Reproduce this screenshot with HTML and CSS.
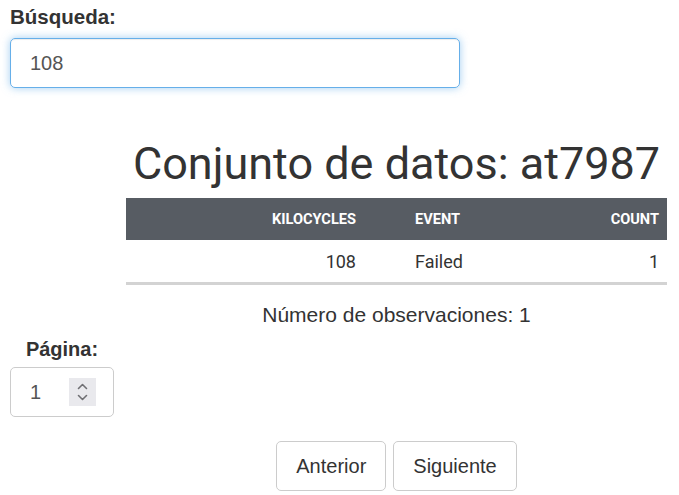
FILE: index.html
```html
<!DOCTYPE html>
<html lang="es">
<head>
<meta charset="utf-8">
<title>Conjunto de datos</title>
<link rel="stylesheet" href="styles.css">
</head>
<body>
<div class="page">
  <div class="search">
    <label class="lbl">Búsqueda:</label>
    <div class="text-input">108</div>
  </div>
  <div class="row">
    <aside class="side">
      <label class="lbl side-lbl">Página:</label>
      <div class="spin">
        <span class="spin-val">1</span>
        <span class="spin-arrows">
          <svg width="27" height="28" viewBox="0 0 27 28">
            <path d="M9.5 10.5 L13.5 6.5 L17.5 10.5" fill="none" stroke="#6f6f73" stroke-width="1.6" stroke-linecap="round" stroke-linejoin="round"/>
            <path d="M9.5 17.5 L13.5 21.5 L17.5 17.5" fill="none" stroke="#6f6f73" stroke-width="1.6" stroke-linecap="round" stroke-linejoin="round"/>
          </svg>
        </span>
      </div>
    </aside>
    <main class="main">
      <h1 class="title">Conjunto de datos: at7987</h1>
      <table class="data">
        <thead>
          <tr><th class="c1">KILOCYCLES</th><th class="c2">EVENT</th><th class="c3">COUNT</th></tr>
        </thead>
        <tbody>
          <tr><td class="c1">108</td><td class="c2">Failed</td><td class="c3">1</td></tr>
        </tbody>
      </table>
      <p class="count">Número de observaciones: 1</p>
      <div class="pager">
        <button class="btn btn-prev">Anterior</button>
        <button class="btn btn-next">Siguiente</button>
      </div>
    </main>
  </div>
</div>
</body>
</html>
```
FILE: styles.css
```css
html, body {
  margin: 0;
  padding: 0;
  background: #ffffff;
}
body {
  font-family: "Liberation Sans", Arial, sans-serif;
  color: #333333;
}
.page {
  padding: 5px 12px 0 10px;
}
.lbl {
  display: block;
  font-weight: bold;
  font-size: 20px;
  line-height: 24px;
  color: #333333;
}
.search .lbl {
  font-size: 20.5px;
  margin-bottom: 9px;
}
.text-input {
  box-sizing: border-box;
  width: 450px;
  height: 50px;
  border: 1px solid #66afe9;
  border-radius: 5px;
  box-shadow: inset 0 1px 1px rgba(0,0,0,.075), 0 0 8px rgba(102,175,233,.6);
  display: flex;
  align-items: center;
  padding-left: 19px;
  font-size: 20px;
  color: #555555;
}
.row {
  display: flex;
  gap: 12px;
  margin-top: 51px;
}
.side {
  width: 104px;
  flex: none;
  margin-top: 198px;
}
.side-lbl {
  text-align: center;
  margin-bottom: 6px;
}
.spin {
  box-sizing: border-box;
  width: 104px;
  height: 50px;
  border: 1px solid #cccccc;
  border-radius: 5px;
  display: flex;
  align-items: center;
  padding-left: 19px;
  font-size: 20px;
  color: #555555;
}
.spin-val {
  flex: 1;
}
.spin-arrows {
  display: block;
  width: 27px;
  height: 28px;
  background: #e9e9ed;
  margin-right: 17px;
}
.spin-arrows svg {
  display: block;
}
.main {
  width: 541px;
  flex: none;
}
.title {
  margin: 0 0 9px;
  font-family: Roboto, "Liberation Sans", sans-serif;
  font-weight: 400;
  font-size: 45px;
  line-height: 50px;
  text-align: center;
  color: #333333;
}
.data {
  width: 100%;
  border-collapse: collapse;
  font-family: Roboto, "Liberation Sans", sans-serif;
}
.data thead tr {
  background: #575c63;
}
.data th {
  height: 42px;
  padding: 0 8px;
  font-size: 14.6px;
  font-weight: 700;
  color: #ffffff;
}
.data td {
  height: 42px;
  padding: 0 8px;
  font-size: 18px;
  color: #333333;
  border-bottom: 3px solid #d3d3d3;
}
.c1 {
  width: 222px;
  text-align: right;
}
.data .c2 {
  text-align: left;
  padding-left: 51px;
}
.c3 {
  text-align: right;
}
.count {
  margin: 18px 0 0;
  font-size: 21px;
  line-height: 24px;
  text-align: center;
  color: #333333;
}
.pager {
  display: flex;
  justify-content: center;
  gap: 7px;
  margin-top: 114px;
}
.btn {
  box-sizing: border-box;
  height: 50px;
  padding: 0 19px;
  border: 1px solid #cccccc;
  border-radius: 5px;
  background: #ffffff;
  font-family: "Liberation Sans", Arial, sans-serif;
  font-size: 20px;
  color: #333333;
}
```
